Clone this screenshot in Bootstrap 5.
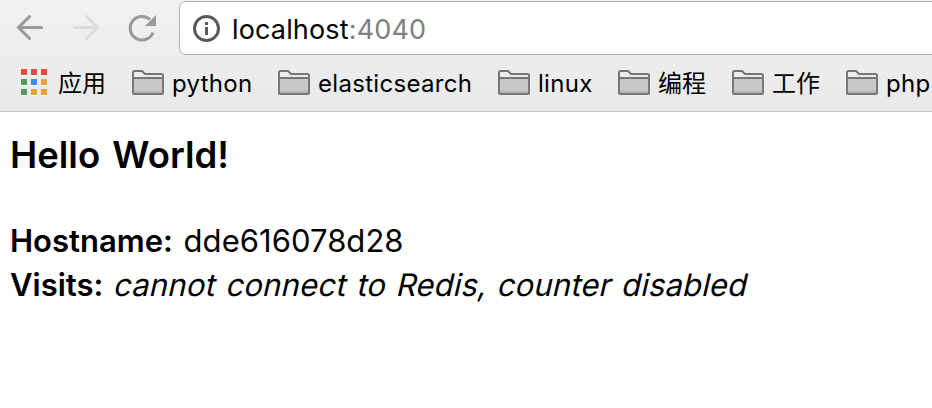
<!DOCTYPE html>
<html lang="zh-CN">
<head>
<meta charset="utf-8">
<meta name="viewport" content="width=device-width, initial-scale=1">
<title>localhost:4040</title>
<link rel="stylesheet" href="https://cdn.jsdelivr.net/npm/bootstrap@5.3.0/dist/css/bootstrap.min.css">
<style>
body{color:#000;background:#fff;font-family:Inter,"Noto Sans CJK SC",sans-serif}
.chrome{height:112px;background:linear-gradient(#f1f1f1,#e9e9e9);border-bottom:1px solid #c6c6c6}
.toolbar{height:56px;padding-left:14px}
.tool{width:32px;height:32px;margin:11px 24px 0 0}
.address{height:54px;margin:1px -8px 0 -3px;padding-left:12px;background:#fff;border:1px solid #b2b2b2;border-radius:7px}
.url{font-size:27px;line-height:50px;margin-left:10px;padding-top:3px;letter-spacing:.15px}
.url .port{color:#808080}
.bookmarks{height:54px;padding-left:20px;display:grid;grid-template-columns:112px 146px 220px 120px 114px 114px 100px}
.mark-label{font-size:24px;line-height:50px;padding-top:2px;margin-left:8px;letter-spacing:.3px}
.apps-label{margin-left:10px}
.cjk{font-family:"Noto Sans CJK SC",sans-serif;letter-spacing:0;padding:0 0 2px}
.page{padding:20px 10px}
.title{font-size:36.5px;line-height:46px;font-weight:600;margin-bottom:41px;word-spacing:3px}
.info{font-size:31px;line-height:44px}
.info b{font-weight:600}
.info span{margin-left:2px;letter-spacing:.05px}
.info i{display:inline-block;font-style:normal;transform:skewX(-13deg);margin-left:3px;letter-spacing:.17px;word-spacing:1.8px}
</style>
</head>
<body class="overflow-hidden">
<svg class="d-none">
  <symbol id="folder" viewBox="0 0 32 26">
    <path d="M1 23V2.500Q1 1 2.500 1H10l3 3h16.500Q31 4 31 5.500v17.500q0 1-1 1H2q-1 0-1-1z" fill="#ececec" stroke="#777" stroke-width="2"/>
    <path d="M2 9h28v14H2z" fill="#c8c8c8"/><path d="M2 21h28v2H2z" fill="#b5b5b5"/>
    <path d="M1 8h30" stroke="#777" stroke-width="2"/>
  </symbol>
</svg>
<header class="chrome">
  <nav class="toolbar d-flex align-items-start">
    <svg class="tool flex-shrink-0" viewBox="0 0 32 32" fill="none" stroke="#999" stroke-width="3" stroke-linecap="round"><path d="M27.500 16.500H5M15.500 5.500l-11 11 11 11"/></svg>
    <svg class="tool flex-shrink-0" viewBox="0 0 32 32" fill="none" stroke="#dcdcdc" stroke-width="3" stroke-linecap="round"><path d="M4.500 16.500h23M16.500 5.500l11 11-11 11"/></svg>
    <svg class="tool flex-shrink-0" viewBox="0 0 32 32"><path d="M27 21.500A11.800 11.800 0 1 1 24 8.500" fill="none" stroke="#999" stroke-width="3"/><path d="M30 4v11H19z" fill="#999"/></svg>
    <div class="address flex-grow-1 d-flex align-items-center">
      <svg class="flex-shrink-0" width="30" height="30" viewBox="0 0 30 30"><circle cx="14.500" cy="15.500" r="12" fill="none" stroke="#5a5a5a" stroke-width="3"/><path d="M13 9h3v3h-3zM13 14h3v8h-3z" fill="#5a5a5a"/></svg>
      <div class="url text-nowrap"><span class="host">localhost</span><span class="port">:4040</span></div>
    </div>
  </nav>
  <nav class="bookmarks align-items-center text-nowrap">
    <div class="d-flex align-items-center">
      <svg width="28" height="28" viewBox="0 1 28 28"><path d="M1 7h6v1H1zM11 7h6v1h-6zM21 7h6v1h-6zM1 17h6v1H1zM11 17h6v1h-6zM21 17h6v1h-6zM1 27h6v1H1zM11 27h6v1h-6zM21 27h6v1h-6z" fill="#fff"/><path d="M1 1h6v6H1zM11 1h6v6h-6zM21 1h6v6h-6z" fill="#e64a3f"/><path d="M1 11h6v6H1zM1 21h6v6H1z" fill="#519b5c"/><path d="M11 11h6v6h-6z" fill="#3f8bef"/><path d="M21 11h6v6h-6zM11 21h6v6h-6zM21 21h6v6h-6z" fill="#e8a237"/></svg>
      <span class="mark-label apps-label cjk">应用</span>
    </div>
    <div class="d-flex align-items-center"><svg width="32" height="26"><use href="#folder"/></svg><span class="mark-label">python</span></div>
    <div class="d-flex align-items-center"><svg width="32" height="26"><use href="#folder"/></svg><span class="mark-label">elasticsearch</span></div>
    <div class="d-flex align-items-center"><svg width="32" height="26"><use href="#folder"/></svg><span class="mark-label">linux</span></div>
    <div class="d-flex align-items-center"><svg width="32" height="26"><use href="#folder"/></svg><span class="mark-label cjk">编程</span></div>
    <div class="d-flex align-items-center"><svg width="32" height="26"><use href="#folder"/></svg><span class="mark-label cjk">工作</span></div>
    <div class="d-flex align-items-center"><svg width="32" height="26"><use href="#folder"/></svg><span class="mark-label">php</span></div>
  </nav>
</header>
<main class="page text-nowrap">
  <h3 class="title">Hello World!</h3>
  <div class="info"><b>Hostname:</b> <span>dde616078d28</span></div>
  <div class="info"><b>Visits:</b> <i>cannot connect to Redis, counter disabled</i></div>
</main>
<script src="https://cdn.jsdelivr.net/npm/bootstrap@5.3.0/dist/js/bootstrap.bundle.min.js"></script>
</body>
</html>
